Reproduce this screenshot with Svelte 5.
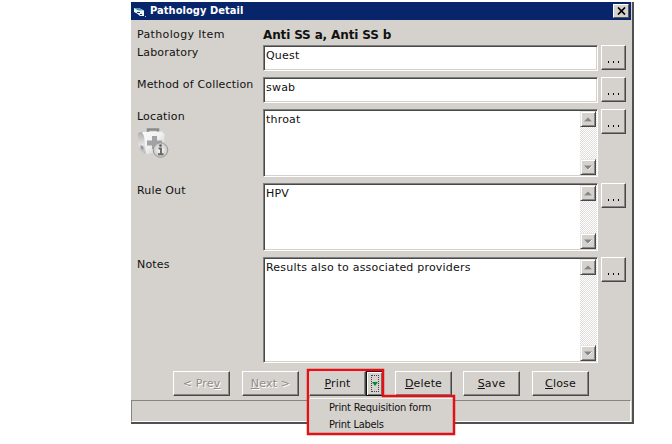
<script>
  const fields = [
    { label: 'Laboratory', value: 'Quest', size: 'single' },
    { label: 'Method of Collection', value: 'swab', size: 'single' },
    { label: 'Location', value: 'throat', size: 'multi', kit: true },
    { label: 'Rule Out', value: 'HPV', size: 'multi' },
    { label: 'Notes', value: 'Results also to associated providers', size: 'notes' }
  ];
</script>

<main>
<div class="window">
  <header>
    <svg class="app" width="12" height="12" viewBox="0 0 12 12">
      <path d="M0 2h5l5 2.500V10H6L3 7.500 0 6z" fill="#eef5f8" />
      <path d="M0 2h5l4 2.500H4z" fill="#4d9bb0" />
      <path d="M3 6.500h3M6 8.500h2" fill="none" stroke="#173968" stroke-width="1.200" />
      <path d="M11 10h1v1h-1z" fill="#a4c8e0" />
    </svg>
    <span class="title">Pathology Detail</span>
    <button class="x" aria-label="Close window">
      <svg width="9" height="8" viewBox="0 0 9 8"><path d="M1 .5l7 7M8 .5l-7 7" stroke="#000" stroke-width="1.7" /></svg>
    </button>
  </header>

  <div class="item"><span class="label">Pathology Item</span><b>Anti SS a, Anti SS b</b></div>

  <div class="form">
    {#each fields as f}
      <div class="row {f.size}">
        <div class="label">
          <span>{f.label}</span>
          {#if f.kit}
            <svg class="kit" width="32" height="30" viewBox="0 0 32 30">
              <defs>
                <linearGradient id="face" x1="0" y1="0" x2="1" y2="1">
                  <stop offset="0" stop-color="#fafafa" /><stop offset=".5" stop-color="#f0f0f0" /><stop offset="1" stop-color="#c0c0c0" />
                </linearGradient>
                <linearGradient id="side" x1="0" y1="0" x2="0" y2="1">
                  <stop offset="0" stop-color="#aaa" /><stop offset=".6" stop-color="#e4e4e4" /><stop offset="1" stop-color="#b4b4b4" />
                </linearGradient>
                <radialGradient id="badge"><stop offset="0" stop-color="#fff" /><stop offset="1" stop-color="#c4c4c4" /></radialGradient>
              </defs>
              <path d="M11 5V1.500h10V5" fill="none" stroke="#8a8a8a" stroke-width="2.500" />
              <path d="M1 5l5-1.500 2 3L9 26l-7-4z" fill="url(#side)" />
              <path d="M5 4l20-.5 2.500 3V23L9 26 7 8z" fill="url(#face)" />
              <path d="M3.500 17l3 1.500v4l-3-2z" fill="#999" />
              <path d="M15 8h5v4.500h5v5h-5V21h-5v-3.500h-5v-5h5z" fill="#a2a2a2" />
              <circle cx="23.500" cy="22" r="7.300" fill="url(#badge)" stroke="#989898" />
              <path d="M21.500 20.500H24V26M21 26.200h5.500" fill="none" stroke="#666" stroke-width="1.900" />
              <circle cx="23.500" cy="17.600" r="1.400" fill="#666" />
            </svg>
          {/if}
        </div>
        <div class="box">
          <span class="value">{f.value}</span>
          {#if f.size !== 'single'}
            <div class="scroll">
              <i><svg width="8" height="5" viewBox="0 0 8 5"><path d="M1 5h7" stroke="#fff" /><path d="M0 4.500l4-4 4 4z" fill="#858585" /></svg></i>
              <i><svg width="8" height="5" viewBox="0 0 8 5"><path d="M8 1L4 5" stroke="#fff" /><path d="M0 .5l4 4 4-4z" fill="#858585" /></svg></i>
            </div>
          {/if}
        </div>
        <button class="btn more" aria-label="Browse {f.label}"><svg width="13" height="2"><path d="M1 0h1v2H1zM6 0h1v2H6zM11 0h1v2h-1z" /></svg></button>
      </div>
    {/each}
  </div>

  <div class="actions">
    <button class="btn off">&lt; Pre<u>v</u></button>
    <button class="btn off next"><u>N</u>ext &gt;</button>
    <button class="btn print"><u>P</u>rint</button>
    <button class="btn drop" aria-label="Print options">
      <span><svg width="6" height="4"><path d="M0 0h6L3 4z" fill="#06843c" /></svg></span>
    </button>
    <button class="btn delete"><u>D</u>elete</button>
    <button class="btn save"><u>S</u>ave</button>
    <button class="btn close"><u>C</u>lose</button>
  </div>
  <div class="status"></div>

  <div class="menu">
    <span>Print Requisition form</span>
    <span class="labels">Print Labels</span>
  </div>
  <svg class="outline" width="151" height="70" viewBox="0 0 151 70">
    <path d="M2 2h75v26h71v38H2z" fill="none" stroke="#e01218" stroke-width="2.500" />
  </svg>
</div>
</main>

<style>
  :global(body) { background: #fff; }
  main { box-sizing: border-box; height: 444px; padding: 2px 0 0 131px; }
  .window {
    position: relative;
    box-sizing: border-box;
    width: 503px;
    height: 422px;
    background: #d5d2cd;
    border-right: 2px solid #505050;
    border-bottom: 2px solid #505050;
    color: #111;
    font: 11px/14px "DejaVu Sans", Verdana, sans-serif;
    letter-spacing: .16px;
    display: flex;
    flex-direction: column;
    white-space: nowrap;
  }
  header {
    display: flex;
    align-items: center;
    width: 500px;
    height: 18px;
    background: #08246b;
    color: #fff;
    flex: none;
  }
  .app { margin: 1px 4px 0 3px; }
  .title { font: bold 11px/16px "DejaVu Sans Condensed", "DejaVu Sans", sans-serif; font-stretch: condensed; letter-spacing: .06px; }
  button { font: inherit; letter-spacing: inherit; color: inherit; padding: 0; box-sizing: border-box; margin: 0; }
  .x {
    margin: 0 2px 0 auto;
    width: 16px;
    height: 14px;
    display: flex;
    align-items: center;
    justify-content: center;
    background: #d5d2cd;
    border: 1px solid;
    border-color: #fff #555 #555 #fff;
  }
  .item { display: flex; height: 25px; box-sizing: border-box; padding: 8px 0 0 6px; flex: none; }
  .item .label { letter-spacing: .36px; }
  .label { width: 126px; flex: none; }
  .item b { font-size: 12px; letter-spacing: -.14px; }
  .form { padding-left: 6px; display: flex; flex-direction: column; gap: 6px; }
  .row { display: flex; align-items: flex-start; }
  .row .label { display: flex; flex-direction: column; align-items: flex-start; padding-top: 1px; }
  .kit { margin-top: 4px; }
  .box {
    box-sizing: border-box;
    width: 335px;
    height: 26px;
    background: #fff;
    border: 1px solid;
    border-color: #808080 #fff #fff #808080;
    box-shadow: inset 1px 1px #484848, inset -1px -1px #d5d2cd;
    display: flex;
    justify-content: space-between;
  }
  .multi .box { height: 68px; }
  .notes .box { height: 106px; }
  .value { padding: 3px 0 0 2px; letter-spacing: .2px; }
  .scroll {
    margin: 1px 0 1px 0;
    width: 17px;
    background: repeating-conic-gradient(#fff 0 25%, #dfdddb 0 50%) 0 0 / 2px 2px;
    display: flex;
    flex-direction: column;
    justify-content: space-between;
  }
  .scroll i {
    box-sizing: border-box;
    width: 16px;
    height: 16px;
    background: #d5d2cd;
    border: 1px solid;
    border-color: #e8e6e2 #484848 #484848 #e8e6e2;
    box-shadow: inset 1px 1px #fff, inset -1px -1px #888;
    display: flex;
    align-items: center;
    justify-content: center;
  }
  .btn {
    background: #d5d2cd;
    border: 1px solid;
    border-color: #fff #484848 #484848 #fff;
    box-shadow: inset -1px -1px #858585;
    height: 25px;
    width: 57px;
  }
  .more { width: 25px; height: 25px; margin-left: 3px; display: flex; justify-content: center; padding-top: 15px; }
  .actions { display: flex; height: 37px; box-sizing: border-box; padding: 8px 0 0 42px; flex: none; }
  .off { color: #8e8d89; text-shadow: 1px 1px #fff; }
  .next { margin-left: 12px; }
  .print { margin-left: 10px; width: 57px; }
  .drop { width: 17px; border-color: #111; box-shadow: inset 1px 1px #fff, inset -1px -1px #777; display: flex; align-items: center; justify-content: center; }
  .drop span { width: 8px; height: 17px; border: 1px dotted #444; box-sizing: border-box; display: flex; align-items: center; justify-content: center; }
  .drop svg { flex: none; }
  .delete { margin-left: 12px; }
  .save { margin-left: 11px; }
  .close { margin-left: 12px; }
  u { text-underline-offset: 1px; text-decoration-thickness: 1px; text-decoration-skip-ink: none; }
  .status {
    box-sizing: border-box;
    width: 500px;
    height: 22px;
    border: 1px solid;
    border-color: #858585 #fff #fff #858585;
  }
  .menu {
    position: absolute;
    left: 178px;
    top: 396px;
    width: 145px;
    height: 37px;
    box-sizing: border-box;
    padding: 0 0 0 19px;
    border: 1px solid #f5f3f0;
    background: #d5d2cd;
    display: flex;
    flex-direction: column;
    font: 11px/17px "DejaVu Sans Condensed", "DejaVu Sans", sans-serif;
    font-stretch: condensed;
    letter-spacing: -.2px;
  }
  .labels { letter-spacing: -.25px; }
  .outline { position: absolute; left: 175px; top: 366px; }
</style>
